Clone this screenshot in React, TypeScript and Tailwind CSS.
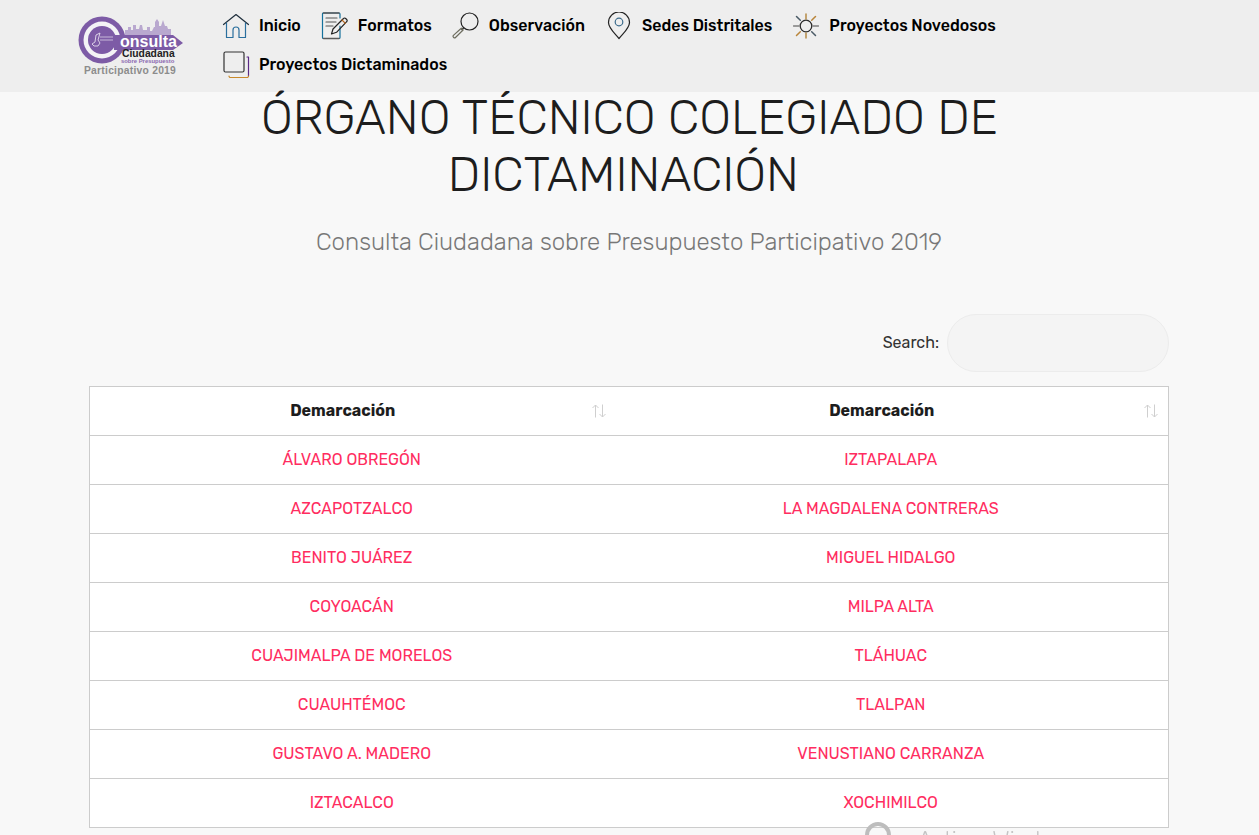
import React from 'react';

const font = { fontFamily: 'Rubik, Inter, "Noto Sans", sans-serif' };

const HomeIcon = () => (
  <svg width="28" height="26" viewBox="0 0 28 26" fill="none" strokeWidth="1.2" strokeLinecap="round" strokeLinejoin="round">
    <path d="M1.500 11.500 14 1.500l12.500 10" stroke="#1f2f3d" />
    <path d="M4.500 10v14.500h6.500v-7.500a3 3 0 0 1 6 0v7.500h6.500V10" stroke="#2a6f9e" />
  </svg>
);

const FormIcon = () => (
  <svg width="28" height="28" viewBox="0 0 28 28" fill="none" strokeWidth="1.2" strokeLinecap="round" strokeLinejoin="round">
    <path d="M19 14v11.500a1 1 0 0 1-1 1H2.500a1 1 0 0 1-1-1V2a1 1 0 0 1 1-1H18a1 1 0 0 1 1 1v4" stroke="#14719c" />
    <path d="M2.500 1H18M2.500 26.500H18" stroke="#5a5a5a" strokeWidth="1.500" />
    <path d="M5 6h11M5 10h10M5 14h7" stroke="#555" />
    <path d="m10.500 22 1.500-5L22.500 6.500a1.500 1.500 0 0 1 2.200 0l1 1a1.500 1.500 0 0 1 0 2.200L15.500 20.300z" stroke="#222" />
    <path d="m21 8 3.400 3.400" stroke="#b5651d" />
  </svg>
);

const SearchIcon = () => (
  <svg width="28" height="27" viewBox="0 0 28 27" fill="none" strokeWidth="1.2" strokeLinecap="round" strokeLinejoin="round">
    <circle cx="17.500" cy="9.500" r="8.500" stroke="#222" />
    <path d="M11.500 16 9.800 17.700" stroke="#222" />
    <path d="m9.300 16.200 1.800 1.800-7.600 7.500a1.200 1.200 0 0 1-1.700 0l-.4-.4a1.200 1.200 0 0 1 0-1.700z" stroke="#6d6d5f" />
  </svg>
);

const PinIcon = () => (
  <svg width="24" height="28" viewBox="0 0 24 28" fill="none" strokeWidth="1.2" strokeLinecap="round" strokeLinejoin="round">
    <path d="M12 26.500C7 20.500 1.500 16 1.500 10.500a10.500 10.500 0 0 1 21 0C22.500 16 17 20.500 12 26.500z" stroke="#222" />
    <circle cx="12" cy="10" r="3.800" stroke="#3b6b8c" />
  </svg>
);

const SunIcon = () => (
  <svg width="26" height="26" viewBox="0 0 26 26" fill="none" strokeWidth="1.500" strokeLinecap="round">
    <circle cx="13" cy="13" r="5.800" stroke="#2b2b2b" strokeWidth="1.300" />
    <path d="M13 1v5M13 20v5" stroke="#b58b45" />
    <path d="M.5 13h5.500M20 13h5.500" stroke="#7d7d7d" />
    <path d="m3.500 3.500 3.800 3.800M18.700 18.700l3.800 3.800" stroke="#4a5a66" />
    <path d="m22.500 3.500-3.800 3.800M7.300 18.700l-3.800 3.800" stroke="#b9853a" />
  </svg>
);

const SquaresIcon = () => (
  <svg width="27" height="28" viewBox="0 0 27 28" fill="none" strokeWidth="1.200" strokeLinecap="round" strokeLinejoin="round">
    <rect x="1" y="1" width="20" height="20" rx="1.500" stroke="#333" />
    <path d="M24 6h1.500v19" stroke="#5b2a86" />
    <path d="M25.500 25a1.500 1.500 0 0 1-1.500 1.500H7.500A1.500 1.500 0 0 1 6 25" stroke="#c98a2b" />
  </svg>
);

const Logo = () => (
  <svg width="108" height="62" viewBox="0 0 108 62" className="block">
    <path d="M47 19v-5h3v-3h3v3h2V9h3v4h3l1-4h2l1 5h4v-3h3v4h2l2-4h1V6l2-3 2 3v4h2l2-6 2 6h2l1 3h3v6z" fill="#b9a8cf" />
    <circle cx="24" cy="24" r="23.500" fill="#7d5ba6" />
    <circle cx="24" cy="24" r="18.500" fill="#f4f3f6" />
    <circle cx="24" cy="24" r="14" fill="#7d5ba6" />
    <path d="M36 19h59l10 8-10 7H36z" fill="#7d5ba6" />
    <path d="M14 28l3-2 1-7 4-2-2 7 2 3-2 3h-4z" fill="none" stroke="#f1edf6" strokeWidth=".8" />
    <path d="M22 21h13M22 24h13" stroke="#d9cfe6" strokeWidth=".8" />
    <text x="42" y="31" fontFamily="Liberation Sans, sans-serif" fontWeight="700" fontSize="16" fill="#fff">onsulta</text>
    <text x="44" y="41" fontFamily="Liberation Sans, sans-serif" fontWeight="700" fontSize="10.300" fill="#222">Ciudadana</text>
    <text x="43" y="47" fontFamily="Liberation Sans, sans-serif" fontWeight="700" fontSize="5.900" fill="#8a68b0">sobre Presupuesto</text>
    <text x="6" y="58" fontFamily="Liberation Sans, sans-serif" fontWeight="700" fontSize="10.300" fill="#8c8c8c" letterSpacing=".25">Participativo 2019</text>
  </svg>
);

const SortIcon = () => (
  <svg width="16" height="14" viewBox="0 0 16 14" fill="none" stroke="#cfcfcf" strokeWidth="1">
    <path d="M4.500 13.500V1M1.500 4l3-3 3 3" />
    <path d="M11.500 .5V13M8.500 10l3 3 3-3" />
  </svg>
);

const navRows = [
  [
    { label: 'Inicio', icon: <HomeIcon /> },
    { label: 'Formatos', icon: <FormIcon /> },
    { label: 'Observación', icon: <SearchIcon /> },
    { label: 'Sedes Distritales', icon: <PinIcon /> },
    { label: 'Proyectos Novedosos', icon: <SunIcon /> },
  ],
  [{ label: 'Proyectos Dictaminados', icon: <SquaresIcon /> }],
];

const rows = [
  ['ÁLVARO OBREGÓN', 'IZTAPALAPA'],
  ['AZCAPOTZALCO', 'LA MAGDALENA CONTRERAS'],
  ['BENITO JUÁREZ', 'MIGUEL HIDALGO'],
  ['COYOACÁN', 'MILPA ALTA'],
  ['CUAJIMALPA DE MORELOS', 'TLÁHUAC'],
  ['CUAUHTÉMOC', 'TLALPAN'],
  ['GUSTAVO A. MADERO', 'VENUSTIANO CARRANZA'],
  ['IZTACALCO', 'XOCHIMILCO'],
];

const App: React.FC = () => {
  return (
    <div className="min-h-screen bg-[#f8f8f8] text-[#1f1f1f]" style={font}>
      <header className="h-[92px] bg-[#eeeeee] flex pl-[78px]">
        <div className="w-[144px] pt-[16px] shrink-0">
          <Logo />
        </div>
        <nav className="pt-[6px]">
          {navRows.map((row, i) => (
            <div key={i} className="flex h-[39px] items-center gap-[20px]">
              {row.map(item => (
                <a key={item.label} className="flex items-center gap-[9px] text-[16px] font-medium text-black">
                  <span className="w-[28px] flex justify-center">{item.icon}</span>
                  {item.label}
                </a>
              ))}
            </div>
          ))}
        </nav>
      </header>

      <main className="px-[89px] pb-[7px] w-[1259px]">
        <h1 className="w-[800px] mx-auto -mt-[3px] text-center text-[48px] leading-[57px] font-light text-[#1d1d1d]">
          ÓRGANO TÉCNICO COLEGIADO DE DICTAMINACIÓN&nbsp;
        </h1>
        <p className="text-center text-[24px] leading-[32px] font-light text-[#777777] mt-[23px] ml-[-1px]">
          Consulta Ciudadana sobre Presupuesto Participativo 2019
        </p>

        <div className="flex justify-end items-center gap-[8px] mt-[56px] mb-[14px] -translate-x-[1px]">
          <label className="text-[16px] text-[#333333]">Search:</label>
          <input className="w-[222px] h-[58px] rounded-full bg-[#f4f4f4] border border-[#ececec]" />
        </div>

        <table className="w-[1080px] table-fixed border-collapse bg-white border border-[#cccccc]">
          <colgroup>
            <col className="w-[526px]" />
            <col />
          </colgroup>
          <thead>
            <tr className="h-[49px] border-b border-[#cccccc]">
              {[0, 1].map(i => (
                <th key={i} className="relative pr-[20px] text-center text-[16px] font-bold text-[#1d1d1d]">
                  Demarcación
                  <span className="absolute right-[9px] top-[17px]"><SortIcon /></span>
                </th>
              ))}
            </tr>
          </thead>
          <tbody>
            {rows.map(r => (
              <tr key={r[0]} className="h-[49px] border-b border-[#cccccc]">
                <td className="pr-[2px] text-center text-[16px] text-[#ff2d5f]">{r[0]}</td>
                <td className="pr-[2px] text-center text-[16px] text-[#ff2d5f]">{r[1]}</td>
              </tr>
            ))}
          </tbody>
        </table>
      </main>

      {/* marca de agua de Windows, cortada por la ventana */}
      <div className="fixed left-[865px] top-[822px] flex items-start gap-[27px] text-[#c4c4c4] pointer-events-none">
        <div className="w-[26px] h-[26px] rounded-full border-[4px] border-[#bdbdbd] shrink-0" />
        <span className="text-[22px] leading-[26px] mt-[5px] font-light">Activar Windows</span>
      </div>
    </div>
  );
};

export default App;
